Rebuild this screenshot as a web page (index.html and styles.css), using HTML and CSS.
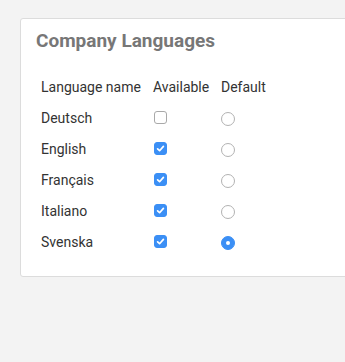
FILE: index.html
```html
<!DOCTYPE html>
<html>
<head>
<meta charset="utf-8">
<link rel="stylesheet" href="styles.css">
</head>
<body>
<div class="card">
  <h2 class="title">Company Languages</h2>
  <table class="langs">
    <thead>
      <tr><th class="c1">Language name</th><th class="c2">Available</th><th class="c3">Default</th></tr>
    </thead>
    <tbody>
      <tr><td>Deutsch</td><td><span class="cb"></span></td><td><span class="rd"></span></td></tr>
      <tr><td>English</td><td><span class="cb on"><svg viewBox="0 0 13 13"><path d="M3.6 6.8 L5.6 8.7 L9.4 4.4" fill="none" stroke="#fff" stroke-width="1.7" stroke-linecap="round" stroke-linejoin="round"/></svg></span></td><td><span class="rd"></span></td></tr>
      <tr><td>Français</td><td><span class="cb on"><svg viewBox="0 0 13 13"><path d="M3.6 6.8 L5.6 8.7 L9.4 4.4" fill="none" stroke="#fff" stroke-width="1.7" stroke-linecap="round" stroke-linejoin="round"/></svg></span></td><td><span class="rd"></span></td></tr>
      <tr><td>Italiano</td><td><span class="cb on"><svg viewBox="0 0 13 13"><path d="M3.6 6.8 L5.6 8.7 L9.4 4.4" fill="none" stroke="#fff" stroke-width="1.7" stroke-linecap="round" stroke-linejoin="round"/></svg></span></td><td><span class="rd"></span></td></tr>
      <tr><td>Svenska</td><td><span class="cb on"><svg viewBox="0 0 13 13"><path d="M3.6 6.8 L5.6 8.7 L9.4 4.4" fill="none" stroke="#fff" stroke-width="1.7" stroke-linecap="round" stroke-linejoin="round"/></svg></span></td><td><span class="rd on"></span></td></tr>
    </tbody>
  </table>
</div>
</body>
</html>
```
FILE: styles.css
```css
html, body {
  margin: 0;
  padding: 0;
  background: #f3f3f3;
  overflow: hidden;
  height: 100%;
}
body {
  font-family: Roboto, "Liberation Sans", sans-serif;
  color: #333;
}
.card {
  margin: 18px 0 0 20px;
  width: 420px;
  background: #fff;
  border: 1px solid #dcdcdc;
  border-radius: 3px;
  padding: 10px 15px 19px 15px;
  box-sizing: border-box;
}
.title {
  margin: 0 0 18px 0;
  font-size: 19px;
  line-height: 24px;
  font-weight: 700;
  color: #777;
}
.langs {
  border-collapse: collapse;
  font-size: 14px;
}
.langs th, .langs td {
  height: 31px;
  padding: 0 0 0 5px;
  text-align: left;
  vertical-align: middle;
  font-weight: 400;
  color: #333;
}
.langs .c1 { width: 107px; }
.langs .c2 { width: 63px; }
.langs .c3 { width: 60px; }
.cb, .rd {
  display: block;
  box-sizing: border-box;
  background: #fff;
}
.cb {
  width: 13px;
  height: 13px;
  margin-left: 1px;
  border: 1px solid #a9a9a9;
  border-radius: 3px;
}
.cb.on {
  background: #3b8ff5;
  border-color: #3b8ff5;
  position: relative;
}
.cb svg {
  position: absolute;
  left: -1px;
  top: -1px;
  width: 13px;
  height: 13px;
}
.rd {
  width: 14px;
  height: 14px;
  border: 1px solid #b2b2b2;
  border-radius: 50%;
  position: relative;
  top: 1px;
}
.rd.on {
  background: #3b8ff5;
  border-color: #3b8ff5;
}
.rd.on::after {
  content: "";
  position: absolute;
  left: 4px;
  top: 4px;
  width: 4px;
  height: 4px;
  border-radius: 50%;
  background: #fff;
}
```
